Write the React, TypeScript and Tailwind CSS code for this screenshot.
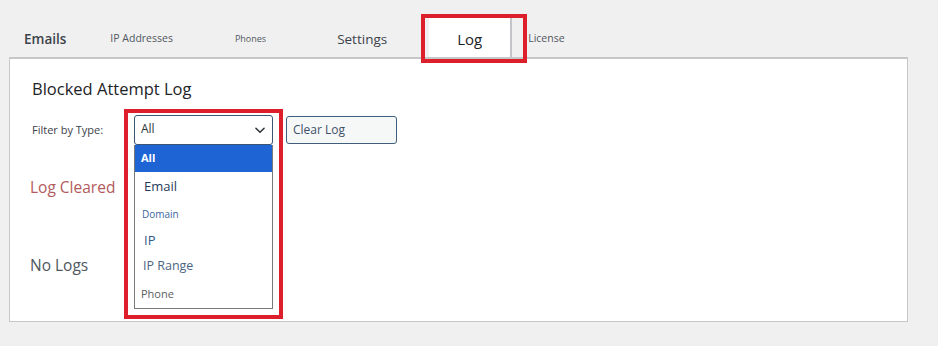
const tabFont = { fontFamily: '"Open Sans", "Noto Sans", sans-serif' };

const options = [
  { label: "All", cls: "text-[11px] font-bold text-white bg-[#1f64d4] pl-[6px]" },
  { label: "Email", cls: "text-[13px] text-[#1f3b5c] pl-[9px] pt-[3px]" },
  { label: "Domain", cls: "text-[10px] text-[#3a66a0] pl-[7px] pt-[3px]" },
  { label: "IP", cls: "text-[13px] text-[#2e5a88] pl-[9px] pt-[3px]" },
  { label: "IP Range", cls: "text-[12.5px] text-[#4b6682] pl-[8px]" },
  { label: "Phone", cls: "text-[11px] text-[#5b5e62] pl-[6px] pt-[1px]" },
];

const App = () => {
  return (
    <div className="h-[346px] w-[938px] overflow-hidden bg-[#f0f0f1]" style={tabFont}>
      {/* tabs */}
      <div className="flex h-[57px] items-end">
        <div className="ml-[24px] flex h-[39px] items-center pt-[3px] text-[13.5px] font-semibold text-[#3c434a]">
          Emails
        </div>
        <div className="ml-[44px] flex h-[39px] items-center pt-[2px] text-[10.5px] text-[#50575e]">
          IP Addresses
        </div>
        <div className="ml-[62px] flex h-[39px] items-center pt-[2px] text-[9px] text-[#50575e]">
          Phones
        </div>
        <div className="ml-[71px] flex h-[39px] items-center pt-[3px] text-[13.5px] text-[#3c434a]">
          Settings
        </div>
        <div className="relative ml-[42px] flex h-[39px] w-[83px] items-center justify-center border-r-2 border-[#c3c4c7] bg-white pt-[3px] text-[15px] text-[#1d2327]">
          Log
          <div className="absolute -left-[8px] -top-[4px] h-[49px] w-[106px] border-[4px] border-[#dc1f2b]" />
        </div>
        <div className="ml-[16px] flex h-[39px] items-center pt-[2px] text-[10.5px] text-[#50575e]">
          License
        </div>
      </div>

      {/* panel */}
      <div className="ml-[9px] h-[265px] w-[899px] border border-t-2 border-[#c6c7c9] bg-white pl-[22px] pt-[18px]">
        <h2 className="text-[16.5px] leading-[24px] text-[#1d2327]">Blocked Attempt Log</h2>

        <div className="mt-[14px] flex items-center">
          <span className="w-[102px] text-[11px] text-[#3c434a]">Filter by Type:</span>
          <div className="relative">
            <div className="flex h-[30px] w-[139px] items-center justify-between rounded-[3px] border border-[#3a5670] bg-white pl-[6px] pr-[5px] text-[12px] text-[#2c3338]">
              <span className="-mt-[3px]">All</span>
              <svg width="14" height="14" viewBox="0 0 24 24" fill="none" stroke="#2c3338" strokeWidth="2.6" strokeLinecap="round" strokeLinejoin="round">
                <path d="M5 9l7 7 7-7" />
              </svg>
            </div>
            <div className="absolute left-0 top-[30px] z-10 w-[139px] border border-t-0 border-[#7a7a7a] bg-white pb-[1px]">
              {options.map((o) => (
                <div key={o.label} className={`flex h-[27px] items-center ${o.cls}`}>
                  {o.label}
                </div>
              ))}
            </div>
            <div className="absolute -left-[10px] -top-[6px] z-20 h-[210px] w-[159px] border-[4px] border-[#dc1f2b]" />
          </div>
          <button className="ml-[13px] flex h-[28px] w-[111px] items-center rounded-[3px] border border-[#3f5f7c] bg-[#f6f7f7] pl-[6px] text-[12px] text-[#3c5068]">
            Clear Log
          </button>
        </div>

        <div className="mt-[31px] -ml-[2px] text-[15.5px] text-[#b35b5e]">Log Cleared</div>
        <div className="mt-[55px] -ml-[2px] text-[15.5px] text-[#50575e]">No Logs</div>
      </div>
    </div>
  );
};

export default App;
